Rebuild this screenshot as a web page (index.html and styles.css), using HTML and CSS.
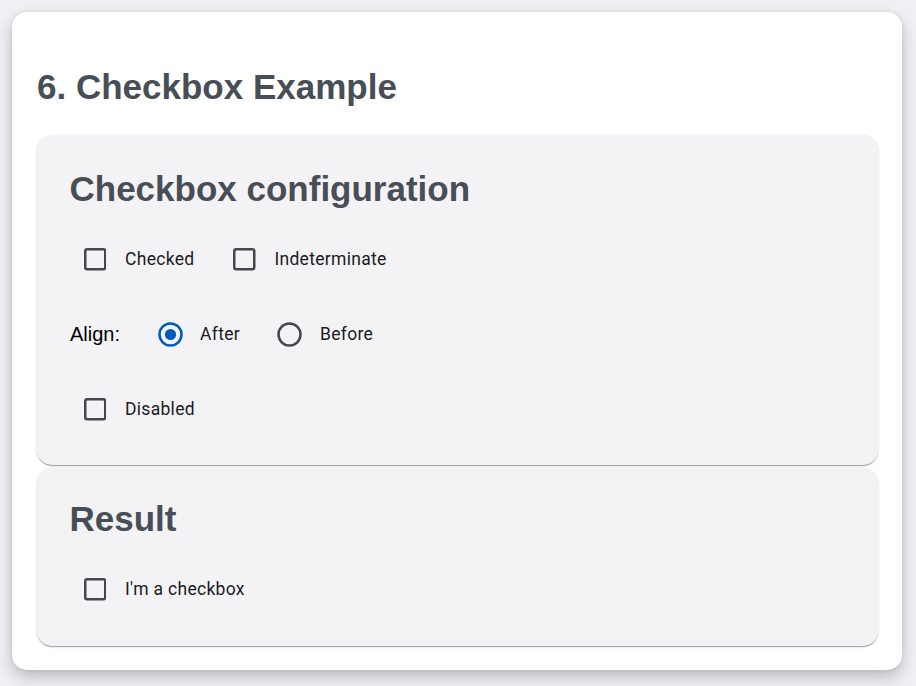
FILE: index.html
```html
<!DOCTYPE html>
<html lang="en">
<head>
<meta charset="utf-8">
<title>Checkbox Example</title>
<link rel="stylesheet" href="styles.css">
</head>
<body>
<div class="page">
  <main class="sheet">
    <h1 class="title">6. Checkbox Example</h1>

    <section class="card card-config">
      <h2 class="card-title">Checkbox configuration</h2>
      <div class="row">
        <label class="check">
          <span class="control">
            <svg class="box" viewBox="0 0 22.5 22.5" width="22.5" height="22.5"><rect x="1.25" y="1.25" width="20" height="20" rx="2" fill="none" stroke="#44474e" stroke-width="2.5"/></svg>
          </span>
          <span class="label">Checked</span>
        </label>
        <label class="check">
          <span class="control">
            <svg class="box" viewBox="0 0 22.5 22.5" width="22.5" height="22.5"><rect x="1.25" y="1.25" width="20" height="20" rx="2" fill="none" stroke="#44474e" stroke-width="2.5"/></svg>
          </span>
          <span class="label">Indeterminate</span>
        </label>
      </div>
      <div class="row">
        <span class="align-label">Align:</span>
        <label class="radio">
          <span class="control radio-control">
            <svg class="circle" viewBox="0 0 25 25" width="25" height="25"><circle cx="12.5" cy="12.5" r="11" fill="none" stroke="#005cbb" stroke-width="2.5"/><circle cx="12.5" cy="12.5" r="5.6" fill="#005cbb"/></svg>
          </span>
          <span class="label">After</span>
        </label>
        <label class="radio">
          <span class="control radio-control">
            <svg class="circle" viewBox="0 0 25 25" width="25" height="25"><circle cx="12.5" cy="12.5" r="11" fill="none" stroke="#44474e" stroke-width="2.5"/></svg>
          </span>
          <span class="label">Before</span>
        </label>
      </div>
      <div class="row">
        <label class="check">
          <span class="control">
            <svg class="box" viewBox="0 0 22.5 22.5" width="22.5" height="22.5"><rect x="1.25" y="1.25" width="20" height="20" rx="2" fill="none" stroke="#44474e" stroke-width="2.5"/></svg>
          </span>
          <span class="label">Disabled</span>
        </label>
      </div>
    </section>

    <section class="card card-result">
      <h2 class="card-title">Result</h2>
      <div class="row">
        <label class="check">
          <span class="control">
            <svg class="box" viewBox="0 0 22.5 22.5" width="22.5" height="22.5"><rect x="1.25" y="1.25" width="20" height="20" rx="2" fill="none" stroke="#44474e" stroke-width="2.5"/></svg>
          </span>
          <span class="label">I'm a checkbox</span>
        </label>
      </div>
    </section>
  </main>
</div>
</body>
</html>
```

FILE: styles.css
```css
* { box-sizing: border-box; }

html, body {
  margin: 0;
  padding: 0;
  background: #eff0f3;
}

.page {
  padding: 12px 14px 16px 12px;
}

.sheet {
  background: #ffffff;
  border-radius: 15px;
  box-shadow: 0 7px 15px rgba(0, 0, 0, 0.22), 0 0 5px rgba(0, 0, 0, 0.07);
  padding: 55px 24px 24px 25px;
  display: flex;
  flex-direction: column;
  gap: 3px;
}

.title {
  margin: 0 0 25px 0;
  font-family: "Liberation Sans", Arial, sans-serif;
  font-weight: 700;
  font-size: 35px;
  line-height: 40px;
  color: #474e56;
}

.card {
  background: #f3f3f6;
  border-radius: 15px;
  box-shadow: 0 2px 1px -1px rgba(0, 0, 0, 0.2), 0 1px 1px 0 rgba(0, 0, 0, 0.14), 0 1px 3px 0 rgba(0, 0, 0, 0.12);
  padding: 34px 22px 18px 20.5px;
  display: flex;
  flex-direction: column;
}

.card-result {
  padding-top: 31px;
  padding-bottom: 19px;
}

.card-title {
  margin: 0 0 13px 12px;
  font-family: "Liberation Sans", Arial, sans-serif;
  font-weight: 700;
  font-size: 35px;
  line-height: 40px;
  color: #474e56;
}

.row {
  height: 75px;
  display: flex;
  align-items: center;
}

.check,
.radio {
  display: flex;
  align-items: center;
  margin: 0 12.5px;
}

.control {
  width: 50px;
  height: 50px;
  display: flex;
  align-items: center;
  justify-content: center;
  flex: none;
}

.box,
.circle {
  display: block;
}

.label {
  padding-left: 5px;
  font-family: Roboto, "Noto Sans", sans-serif;
  font-size: 17.5px;
  line-height: 25px;
  color: #1a1b1f;
  letter-spacing: 0.3px;
}

.align-label {
  margin: 0 12.5px;
  font-family: "Liberation Sans", Arial, sans-serif;
  font-size: 20px;
  line-height: 25px;
  color: #000000;
}
```
